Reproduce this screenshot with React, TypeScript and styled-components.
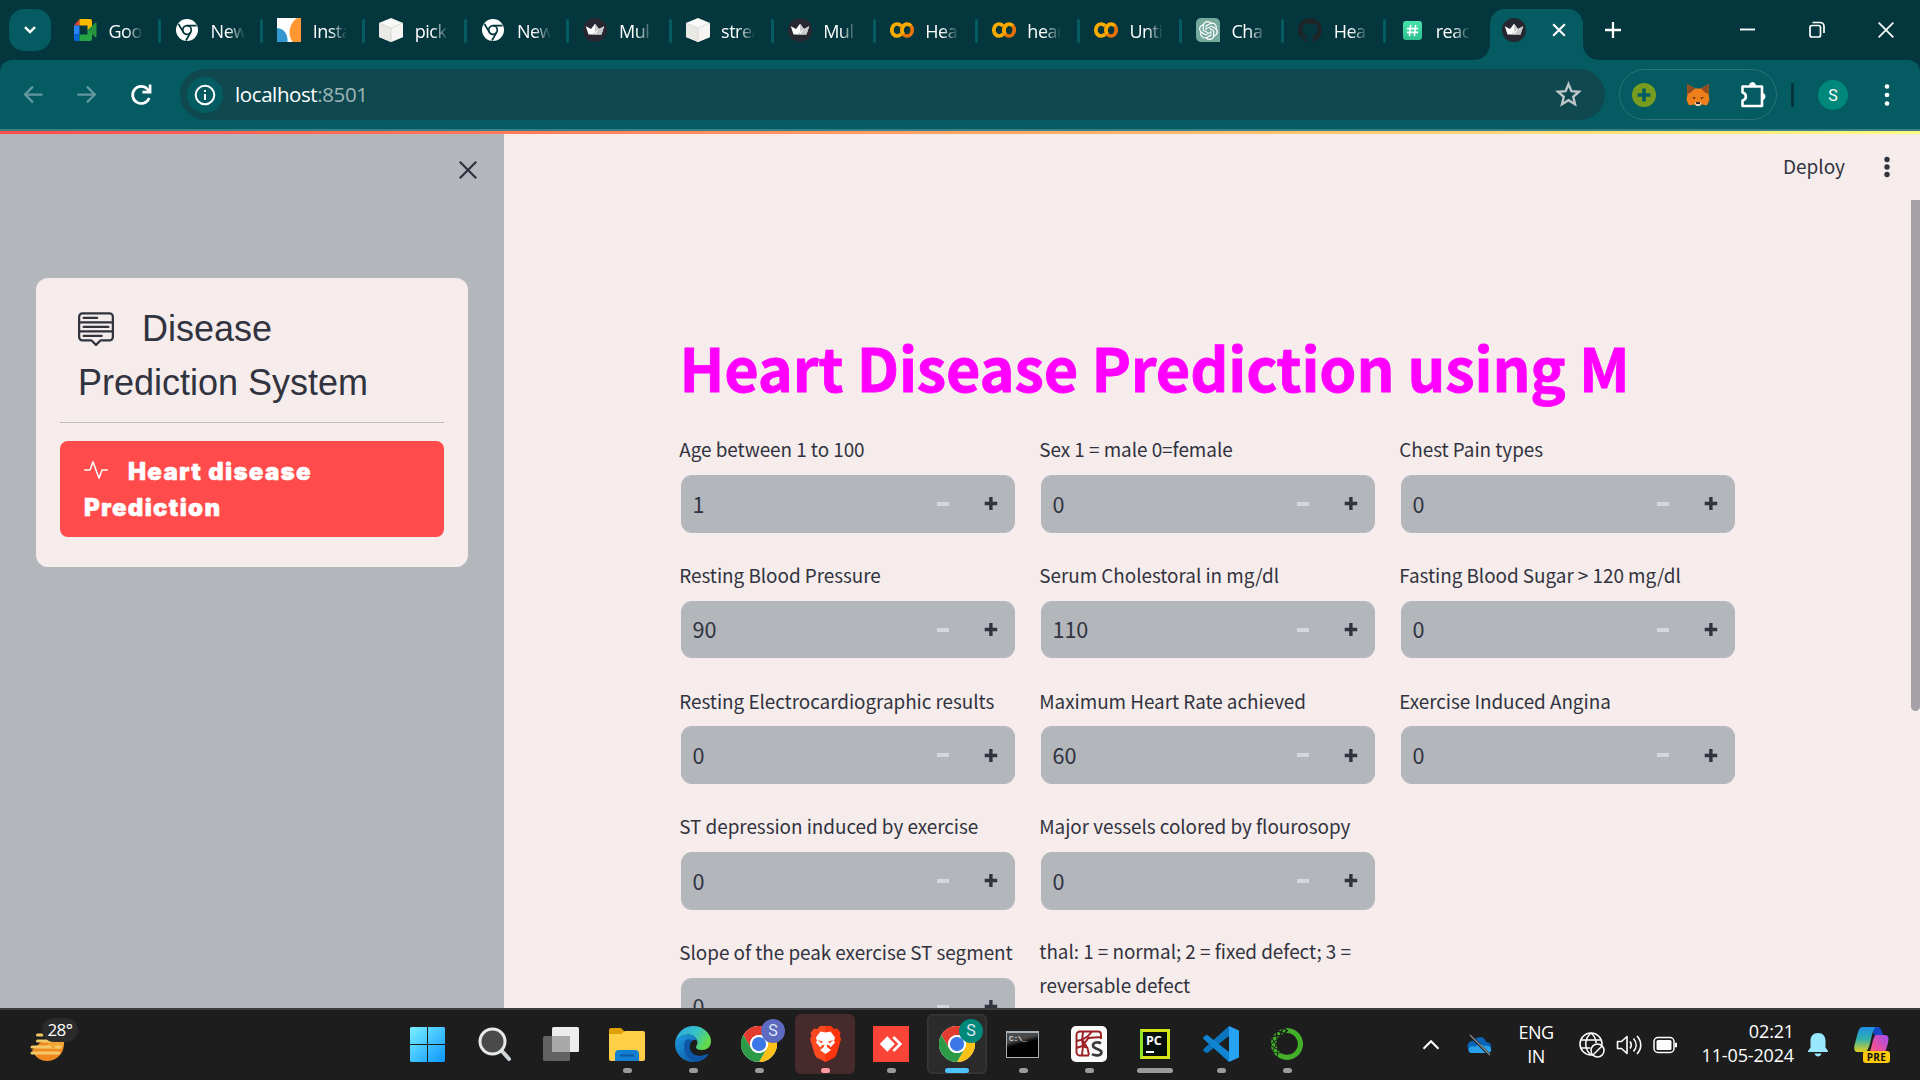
import React from "react";
import styled, { createGlobalStyle, css } from "styled-components";
import { BsActivity, BsMenuUp } from "react-icons/bs";
import { SiAnaconda, SiGithub, SiOpenai } from "react-icons/si";

const UI = '"Open Sans", "Noto Sans", sans-serif';
const SOURCE = '"Noto Sans CJK JP", "Noto Sans", sans-serif';
const ARIAL = '"Liberation Sans", Arial, sans-serif';

const c = {
  frame: "#03373d",
  toolbar: "#045b62",
  omnibox: "#10484f",
  side: "#b3b7bc",
  page: "#f5eceb",
  ink: "#31333f",
  red: "#ff4b4b",
  task: "#1d1d1d",
};

const Global = createGlobalStyle`
  * { box-sizing: border-box; }
  html, body { margin: 0; padding: 0; overflow: hidden; }
  svg { display: block; flex: none; }
`;

const Screen = styled.div`
  width: 1920px;
  height: 1080px;
  display: flex;
  flex-direction: column;
  overflow: hidden;
  font-family: ${UI};
  background: ${c.page};
`;

/* ---------- tab strip ---------- */
const TabStrip = styled.div`
  height: 60px;
  flex: none;
  display: flex;
  background: ${c.frame};
  padding-left: 9px;
`;
const TabSearch = styled.div`
  width: 42px;
  height: 42px;
  margin: 9px 8px 0 0;
  border-radius: 15px;
  background: ${c.toolbar};
  display: grid;
  place-items: center;
`;
const Tab = styled.div`
  width: 102.1px;
  flex: none;
  height: 60px;
  padding: 0 0 0 14px;
  display: flex;
  align-items: center;
`;
const Fav = styled.div`
  width: 24px;
  height: 24px;
  display: grid;
  place-items: center;
`;
const TabText = styled.div`
  width: 34px;
  margin-left: 11.5px;
  overflow: hidden;
  white-space: nowrap;
  color: #fff;
  font-size: 18px;
  line-height: 26px;
  letter-spacing: -0.5px;
  padding-top: 2px;
  mask-image: linear-gradient(90deg, #000 50%, transparent 100%);
`;
const TabRule = styled.i<{ $hidden?: boolean }>`
  width: 3px;
  height: 24px;
  margin: 2px 0 0 auto;
  border-radius: 2px;
  background: ${(p) => (p.$hidden ? "transparent" : c.toolbar)};
`;
const ActiveTab = styled.div`
  position: relative;
  width: 93px;
  flex: none;
  height: 51px;
  margin: 9px 0 0 1.6px;
  padding: 0 17px 9px 12px;
  display: flex;
  align-items: center;
  justify-content: space-between;
  border-radius: 15px 15px 0 0;
  background: ${c.toolbar};
  &::before,
  &::after {
    content: "";
    position: absolute;
    bottom: 0;
    width: 15px;
    height: 15px;
  }
  &::before {
    left: -15px;
    background: radial-gradient(circle at 0 0, transparent 14.5px, ${c.toolbar} 15px);
  }
  &::after {
    right: -15px;
    background: radial-gradient(circle at 100% 0, transparent 14.5px, ${c.toolbar} 15px);
  }
`;
const NewTab = styled.div`
  width: 60px;
  padding-top: 22px;
  display: flex;
  justify-content: center;
`;
const WindowButtons = styled.div`
  margin-left: auto;
  display: flex;
  height: 59px;
`;
const WindowButton = styled.div`
  width: 69px;
  display: grid;
  place-items: center;
`;

/* ---------- toolbar ---------- */
const ToolbarBack = styled.div`
  flex: none;
  height: 69px;
  background: ${c.frame};
`;
const Toolbar = styled.div`
  height: 69px;
  border-radius: 12px 12px 0 0;
  background: ${c.toolbar};
  display: flex;
  align-items: center;
  padding: 0 6px;
`;
const NavButton = styled.div`
  width: 54px;
  height: 54px;
  display: grid;
  place-items: center;
`;
const Omnibox = styled.div`
  width: 1425px;
  height: 51px;
  margin-left: 12px;
  border-radius: 26px;
  padding: 0 23px 0 7px;
  background: ${c.omnibox};
  display: flex;
  align-items: center;
`;
const InfoChip = styled.div`
  width: 36px;
  height: 36px;
  border-radius: 50%;
  background: ${c.toolbar};
  display: grid;
  place-items: center;
`;
const Url = styled.div`
  margin: -1px auto 0 12px;
  font-size: 20.5px;
  line-height: 30px;
  color: #fff;
  letter-spacing: -0.4px;
  span { color: #9fb6b8; }
`;
const Extensions = styled.div`
  width: 158px;
  height: 51px;
  margin-left: 14px;
  border: 1.5px solid #2c7278;
  border-radius: 26px;
  display: flex;
  align-items: center;
  justify-content: space-between;
  padding: 0 10px 0 12px;
`;
const ToolRule = styled.i`
  width: 3px;
  height: 24px;
  margin-left: 14px;
  background: ${c.frame};
`;
const Avatar = styled.div`
  width: 30px;
  height: 30px;
  margin-left: 24px;
  border-radius: 50%;
  background: #00897b;
  color: #fff;
  font: 16px/31px Roboto, sans-serif;
  text-align: center;
`;
const KebabSpot = styled.div`
  margin-left: 35px;
`;
const Seam = styled.div`
  height: 2px;
  flex: none;
  background: #3b8084;
`;
const Decoration = styled.div`
  height: 3px;
  flex: none;
  background: linear-gradient(90deg, #ff4b4b, #fffd80);
`;

/* ---------- page ---------- */
const Body = styled.div`
  height: 874px;
  flex: none;
  display: flex;
  overflow: hidden;
`;
const Sidebar = styled.aside`
  width: 504px;
  flex: none;
  background: ${c.side};
  padding: 27px 36px 0;
`;
const CloseRow = styled.div`
  height: 117px;
  display: flex;
  justify-content: flex-end;
  margin-right: -9px;
`;
const Card = styled.nav`
  height: 289px;
  border-radius: 12px;
  background: ${c.page};
  padding: 24px;
`;
const MenuTitle = styled.div`
  padding: 0 18px;
  font: 36px/54px ${ARIAL};
  color: ${c.ink};
  svg { display: inline-block; vertical-align: -5px; margin-right: 28px; }
`;
const MenuRule = styled.div`
  height: 1px;
  margin: 12px 0 18px;
  background: #bdbcc0;
`;
const MenuLink = styled.div`
  height: 96px;
  padding: 13px 24px 0;
  border-radius: 8px;
  background: ${c.red};
  color: #fff;
  font: 900 24px/36px Inter, ${ARIAL};
  letter-spacing: 1.3px;
  -webkit-text-stroke: 0.5px #fff;
  svg { display: inline-block; vertical-align: -2px; margin-right: 20px; }
`;
const Main = styled.main`
  flex: 1;
  min-width: 0;
  display: flex;
  flex-direction: column;
  background: ${c.page};
`;
const Header = styled.header`
  height: 66px;
  flex: none;
  display: flex;
  align-items: center;
  justify-content: flex-end;
  padding-right: 29px;
  gap: 38px;
  font: 19px/30px ${SOURCE};
  color: ${c.ink};
  span { margin-top: -2px; }
`;
const Scroller = styled.div`
  flex: 1;
  min-height: 0;
  display: flex;
  justify-content: space-between;
  padding-left: 176px;
`;
const Thumb = styled.div`
  width: 9px;
  height: 511px;
  background: #a5a1a7;
  border-radius: 0 0 5px 5px;
`;
const Content = styled.div`
  width: 1056px;
  padding-top: 126px;
`;
const Title = styled.h1`
  margin: 0 0 0 -0.5px;
  height: 106px;
  font: 700 59.4px/80px ${SOURCE};
  letter-spacing: -0.16px;
  -webkit-text-stroke: 0.8px #ff00ff;
  white-space: nowrap;
  color: #ff00ff;
`;
const Columns = styled.div`
  display: grid;
  grid-template-columns: repeat(3, 336px);
  gap: 24px;
  align-items: start;
`;
const Column = styled.div`
  display: flex;
  flex-direction: column;
  gap: 24px;
`;
const Label = styled.label`
  min-height: 35px;
  margin: -0.4px 0 8.4px -0.7px;
  display: flex;
  align-items: center;
  font: 18.9px/33.6px ${SOURCE};
  letter-spacing: -0.04px;
  color: ${c.ink};
`;
const InputBox = styled.div`
  height: 57.7px;
  margin: 0 1px 1px;
  border-radius: 11px;
  background: ${c.side};
  display: flex;
  align-items: center;
`;
const Value = styled.span`
  flex: 1;
  padding: 0 0 0.5px 11.4px;
  font: 21.6px/34px ${SOURCE};
  color: ${c.ink};
`;
const Step = styled.span`
  width: 48px;
  display: grid;
  place-items: center;
`;

/* ---------- taskbar ---------- */
const Taskbar = styled.footer`
  height: 72px;
  flex: none;
  display: flex;
  background: ${c.task};
  border-top: 2px solid #3c3c3e;
  color: #fff;
`;
const Weather = styled.div`
  width: 394px;
  padding: 8px 0 0 28px;
`;
const WeatherArt = styled.div`
  position: relative;
  width: 52px;
  height: 52px;
`;
const TempBadge = styled.span`
  position: absolute;
  left: 14px;
  top: 0;
  width: 36px;
  height: 24px;
  border-radius: 12px;
  background: #2b2b2c;
  font-size: 17px;
  line-height: 24px;
  letter-spacing: -0.5px;
  text-align: center;
`;
const App66 = styled.div<{ $tint?: string; $edge?: string; $gap?: number }>`
  width: 60px;
  height: 60px;
  margin: 4px 3px 0 ${(p) => 3 + (p.$gap ?? 0)}px;
  border-radius: 6px;
  display: flex;
  flex-direction: column;
  align-items: center;
  padding-top: 12px;
  position: relative;
  ${(p) => p.$tint && css`background: ${p.$tint};`}
  ${(p) => p.$edge && css`box-shadow: inset 0 0 0 1.5px ${p.$edge};`}
`;
const Glyph = styled.div`
  width: 42px;
  height: 36px;
  display: grid;
  place-items: center;
`;
const Indicator = styled.i<{ $w?: number; $color?: string }>`
  width: ${(p) => p.$w ?? 9}px;
  height: 5px;
  margin-top: 6px;
  border-radius: 3px;
  background: ${(p) => p.$color ?? "#9b9b9b"};
`;
const ProfileBadge = styled.span<{ $color: string }>`
  position: absolute;
  right: 4px;
  top: 5px;
  width: 24px;
  height: 24px;
  border-radius: 50%;
  background: ${(p) => p.$color};
  color: #dfe6f2;
  font: 16px/24px Roboto, sans-serif;
  text-align: center;
`;
const Tray = styled.div`
  margin-left: auto;
  display: flex;
  align-items: center;
  padding-right: 18px;
  height: 69px;
`;
const TrayCell = styled.div<{ $w: number }>`
  width: ${(p) => p.$w}px;
  display: grid;
  place-items: center;
`;
const TrayText = styled.div<{ $w: number; $right?: boolean }>`
  width: ${(p) => p.$w}px;
  font-size: 18px;
  line-height: 24px;
  letter-spacing: ${(p) => (p.$right ? -0.15 : -0.5)}px;
  white-space: nowrap;
  margin-top: ${(p) => (p.$right ? -3 : -1)}px;
  margin-right: ${(p) => (p.$right ? 0 : -1)}px;
  display: flex;
  flex-direction: column;
  align-items: ${(p) => (p.$right ? "flex-end" : "center")};
`;

/* ---------- drawings ---------- */
const Line = ({ d, size, w = 2, color = "#fff", box = 24 }: { d: string; size: number; w?: number; color?: string; box?: number }) => (
  <svg width={size} height={size} viewBox={`0 0 ${box} ${box}`} fill="none" stroke={color} strokeWidth={w}>
    <path d={d} />
  </svg>
);
const Kebab = ({ color, gap, r }: { color: string; gap: number; r: number }) => (
  <svg width="8" height="30" viewBox="0 0 8 30" fill={color}>
    <circle cx="4" cy={15 - gap} r={r} />
    <circle cx="4" cy="15" r={r} />
    <circle cx="4" cy={15 + gap} r={r} />
  </svg>
);
const Crown = () => (
  <svg width="24" height="24" viewBox="0 0 24 24">
    <circle cx="12" cy="12" r="12" fill="#262730" />
    <path d="M2.800 8.200L8 11l4-5.200L16 11l5.200-2.800-2.700 8.300h-13z" fill="#fff" />
    <path d="M12 5.800L16 11l-7 5.500h3zM21.200 8.200L16 11l-4 5.500h6.500z" fill="#c9c9cd" />
  </svg>
);
const ChromeFav = () => (
  <svg width="22" height="22" viewBox="0 0 22 22">
    <circle cx="11" cy="11" r="11" fill="#fff" />
    <circle cx="11" cy="11" r="4.300" fill="none" stroke={c.frame} strokeWidth="1.700" />
    <path d="M11 6.700h9.500M7.300 13.100L2.500 5M14.700 13.100L10 21.500" stroke={c.frame} strokeWidth="1.700" />
  </svg>
);
const Meet = () => (
  <svg width="23" height="22" viewBox="0 0 23 22">
    <path d="M0 6.500L5.500 0v6.500z" fill="#ea4335" />
    <path d="M0 6.500h5.500v9H0z" fill="#2684fc" />
    <path d="M0 15.500h5.500V22H2a2 2 0 01-2-2z" fill="#0066da" />
    <path d="M5.500 0H16a2 2 0 012 2v6l-4.500 3V6.500h-8z" fill="#ffba00" />
    <path d="M5.500 15.500h8V11L18 7v13a2 2 0 01-2 2H5.500z" fill="#27a344" />
    <path d="M14 11l7-7c.8-.7 1.500-.4 1.500.5v13c0 .9-.7 1.200-1.500.5z" fill="#28903e" />
  </svg>
);
const Insta = () => (
  <svg width="24" height="24" viewBox="0 0 24 24">
    <path d="M0 0h24v24H0z" fill="#fff" />
    <path d="M0 10c7 .5 11 6 10.500 14H0z" fill="#3498d0" />
    <path d="M24 0h-4c-9 6-9 18-4.500 24H24z" fill="#ff9833" />
  </svg>
);
const Cube = () => (
  <svg width="24" height="24" viewBox="0 0 24 24">
    <path d="M12 0l12 5v14l-12 5L0 19V5z" fill="#fafafa" />
    <path d="M12 10l12-5v14l-12 5z" fill="#f6f5f3" />
    <path d="M12 10L0 5v14l12 5z" fill="#ebe9e6" />
    <path d="M0 5l12 5 12-5M12 10v14" stroke="#d4d2cf" fill="none" strokeWidth=".8" />
  </svg>
);
const Colab = () => (
  <svg width="24" height="16" viewBox="0 0 24 16" fill="none" strokeWidth="3.700">
    <path d="M11.200 4.200a5.300 6 0 100 7.600" stroke="#f9ab00" />
    <ellipse cx="17" cy="8" rx="5.200" ry="6" stroke="#e8710a" />
    <path d="M13.300 12.200a5.200 6 0 017.400-8.400" stroke="#f9ab00" />
  </svg>
);
const GptTile = styled.div`
  width: 24px;
  height: 24px;
  border-radius: 5px 5px 0 5px;
  background: #75a99c;
  color: #fff;
  display: grid;
  place-items: center;
`;
const HashTile = styled.div`
  width: 19px;
  height: 19px;
  border-radius: 3px;
  background: linear-gradient(#46e3ad, #2dc08e);
  display: grid;
  place-items: center;
`;
const Fox = () => (
  <svg width="24" height="24" viewBox="0 0 24 24">
    <path d="M1 1l8 4.500h6L23 1l-.5 10 1 6-2.500 5.500-5-1L13.500 23h-3L8 21.500l-5 1L.5 17l1-6z" fill="#ee7f1b" />
    <path d="M1 1l8 4.500L5.500 9 1.500 11zM23 1l-8 4.500L18.500 9l4 2z" fill="#8f4c20" />
    <path d="M6 14l3.500.6-1 1.600zM18 14l-3.500.6 1 1.600z" fill="#3a2a20" />
    <path d="M8.500 20l2-1h3l2 1-2 3h-3z" fill="#e6d2c0" />
    <path d="M10.300 19h3.400l.3 2h-4z" fill="#2a2220" />
  </svg>
);
const Chrome = () => (
  <svg width="36" height="36" viewBox="0 0 48 48">
    <circle cx="24" cy="24" r="24" fill="#fff" />
    <path d="M3.200 12A24 24 0 0144.800 12H24a12 12 0 00-10.400 18z" fill="#e33b2e" />
    <path d="M44.800 12A24 24 0 0124 48l10.400-18A12 12 0 0024 12z" fill="#fbc116" />
    <path d="M24 48A24 24 0 013.200 12l10.400 18A12 12 0 0034.400 30z" fill="#2d9a47" />
    <circle cx="24" cy="24" r="12" fill="#fff" />
    <circle cx="24" cy="24" r="9.500" fill="#3b78e7" />
  </svg>
);
const Edge = () => (
  <svg width="36" height="36" viewBox="0 0 36 36">
    <defs>
      <linearGradient id="e1" x1="0" y1="0" x2="1" y2=".4">
        <stop offset="0" stopColor="#2aa5e0" />
        <stop offset=".6" stopColor="#36c2c9" />
        <stop offset="1" stopColor="#62da4c" />
      </linearGradient>
      <linearGradient id="e2" x1="0" y1="0" x2="1" y2="1">
        <stop offset="0" stopColor="#1b9de2" />
        <stop offset="1" stopColor="#0c4a94" />
      </linearGradient>
    </defs>
    <path d="M0 18C1 7 9 0 18 0c11 0 18 8 18 15 0 6-4 9-9 9-4 0-6-1-6-3 0-1 1.500-2 1.500-4.500C22 12 18 8.500 13 8.500 7 8.500 1.500 12 0 18z" fill="url(#e1)" />
    <path d="M0 18C1 12 7 8.500 13 8.500c5 0 9 3 9.500 7-1-2-3.500-2-5-1-5 3-4.500 15 7 15.500 4 0 7-2 9-2C31 33 25 36 18 36 8 36 0 28 0 18z" fill="url(#e2)" />
    <path d="M10 15c-3 8 1 18 10 20.800C28 35 32 31 33.500 28c-2 0-5 2-9 2-11-.5-12-12.500-7-15.500-3-2-6-1.500-7.500.5z" fill="#0d57a6" />
  </svg>
);
const Brave = () => (
  <svg width="31" height="36" viewBox="0 0 31 36">
    <path d="M10 0h11l3 3.200 3-.7 3.500 4.500-1 3 1.500 3-4.500 15c-.7 2-1.500 3-3 4L15.500 36l-8-4c-1.500-1-2.300-2-3-4L0 13l1.500-3-1-3L4 2.500l3 .7z" fill="#fb4a20" />
    <path d="M15.500 0H21l3 3.200 3-.7 3.500 4.500-1 3 1.500 3-4.500 15c-.7 2-1.500 3-3 4l-8 4z" fill="#ff2d08" opacity=".7" />
    <path d="M15.500 6.500l5-1 4.500 6-1 3.500 1 1.500-4.500 5-1-2-3-1 1 3 3.500 2.500-5.500 4-5.500-4 3.500-2.500 1-3-3 1-1 2-4.500-5L7 15l-1-3.500 4.500-6z" fill="#fff" />
    <path d="M7.500 14l5.500 1.500-1.500 1.700zM23.500 14L18 15.500l1.500 1.700z" fill="#fb4a20" />
  </svg>
);
const AnyDesk = () => (
  <svg width="36" height="36" viewBox="0 0 36 36">
    <path d="M0 0h36v36H0z" fill="#fb4438" />
    <path d="M14.300 10.300l7.500 7.700-7.500 7.700L6.800 18z" fill="#fff" />
    <path d="M20.300 11l7 7-7 7" fill="none" stroke="#fff" strokeWidth="2.600" />
  </svg>
);
const CmdBox = styled.div`
  width: 33px;
  height: 27px;
  margin-right: 1px;
  border: 1.5px solid #a9b3bb;
  border-top-width: 2.5px;
  background: linear-gradient(165deg, #4a4a4a 0 30%, #000 46%);
  color: #fff;
  font: 8px/11px "Liberation Mono", monospace;
  letter-spacing: -0.4px;
  padding-left: 2px;
`;
const Spyder = () => (
  <svg width="36" height="36" viewBox="0 0 36 36">
    <rect width="36" height="36" rx="5" fill="#fafafa" />
    <path d="M30 13V8.500A3 3 0 0027 5.500H9a3.500 3.500 0 00-3.500 3.500v17A3.500 3.500 0 009 29.500h9M5.500 15c6-1 11-3 15-9M12 6l-1 8 1 6-1 9M5.500 22l6-2 6-8 12-1M12 20l5 2M11.500 14l5 8 1.500 7" fill="none" stroke="#9c1f23" strokeWidth="1.900" />
    <path d="M30 17.500c-2.500-1.800-8-1.500-8 2 0 4 8.500 3 8.500 7 0 3.500-6.500 3.500-9.500 1.700" fill="none" stroke="#3a3a3a" strokeWidth="2.600" />
  </svg>
);
const PyBox = styled.div`
  width: 30px;
  height: 30px;
  border: 3px solid #d5e51c;
  border-left-color: #8fe52c;
  background: #05100c;
  color: #fff;
  font: 700 12.5px/15px ${UI};
  padding: 1px 0 0 3px;
  &::after {
    content: "";
    display: block;
    width: 8px;
    height: 2px;
    margin-top: 3px;
    background: #fff;
  }
`;
const VsCode = () => (
  <svg width="36" height="36" viewBox="0 0 36 36">
    <path d="M26 0v10L4 27.200l-3-1.700c-1-.8-1-2 0-3z" fill="#0a74bd" />
    <path d="M26 36V26L4 8.800 1 10.500c-1 .8-1 2 0 3z" fill="#1086d3" />
    <path d="M26 0l10 4.500v27L26 36z" fill="#25a2f2" />
  </svg>
);
const Folder = () => (
  <svg width="36" height="33" viewBox="0 0 36 33">
    <path d="M0 2a2 2 0 012-2h10l4 4h17a2 2 0 012 2v6H0z" fill="#e0a008" />
    <path d="M0 6h12l4-3h18a2 2 0 012 2v26a2 2 0 01-2 2H2a2 2 0 01-2-2z" fill="#ffcf48" />
    <path d="M6 33v-7a4 4 0 014-4h16a4 4 0 014 4v7z" fill="#1180d2" />
    <path d="M11 27.500h14" stroke="#0a58a0" strokeWidth="2" />
  </svg>
);
const Start = () => (
  <svg width="35" height="35" viewBox="0 0 35 35">
    <defs>
      <linearGradient id="s" x1="0" y1="0" x2="1" y2="1">
        <stop offset="0" stopColor="#7af0ff" />
        <stop offset="1" stopColor="#0a96ff" />
      </linearGradient>
    </defs>
    <path d="M1 0h16v17H0V1zM18 0h16l1 1v16H18zM0 18h17v17H1l-1-1zM18 18h17v16l-1 1H18z" fill="url(#s)" />
  </svg>
);
const Search = () => (
  <svg width="34" height="34" viewBox="0 0 34 34">
    <path d="M23 23l8 9" stroke="#cfd6da" strokeWidth="4" strokeLinecap="round" />
    <circle cx="14.500" cy="14.500" r="12.500" fill="#4a4a4a" stroke="#e6e9ea" strokeWidth="3" />
  </svg>
);
const TaskView = () => (
  <svg width="36" height="34" viewBox="0 0 36 34">
    <rect x="0" y="9" width="27" height="25" rx="1.500" fill="#626262" />
    <rect x="9" y="0" width="27" height="25" rx="1.500" fill="#ededed" />
    <path d="M9 9h18v16H9z" fill="#a9a9a9" />
  </svg>
);
const WeatherSun = () => (
  <svg width="52" height="52" viewBox="0 0 52 52">
    <path d="M4 32c3 7 8 11 15 11 9 0 17-7 17-17 0-5-2-9-5-11L12 25z" fill="#f08a20" />
    <path d="M22 23h14c0 3-1 6-2 8H17z" fill="#f3a733" />
    <g strokeWidth="3" stroke="#f3c968" strokeLinecap="round">
      <path d="M9.500 17H14M9.500 23H22M4 29h18M28 29h4M4 35h27" />
    </g>
  </svg>
);
const OneDrive = () => (
  <svg width="28" height="22" viewBox="0 0 26 22">
    <path d="M2 15C0 9 5 6 8 7c3-6 11-5 12 1 4 0 6 3 5 7z" fill="#0a64b8" />
    <path d="M3 18c-2-4 2-7 6-5 3-4 7-3 9-1 5-1 8 2 7 5-.5 1.500-2 2-3 2H6c-1.500 0-2.500-.5-3-1z" fill="#28a0ea" />
    <path d="M3.500 1l20 20" stroke="#1d1d1d" strokeWidth="2.500" />
    <path d="M4 1l20 20" stroke="#8b8b8b" strokeWidth="1.300" />
  </svg>
);
const Globe = () => (
  <svg width="26" height="26" viewBox="0 0 26 26" fill="none" stroke="#fff" strokeWidth="1.500">
    <circle cx="12" cy="12" r="11" />
    <path d="M12 1c-7 6-7 16 0 22M12 1c3.500 3 5 6 5.200 10M2 8h20M2 16h9" />
    <circle cx="18.500" cy="18.500" r="6.500" fill={c.task} />
    <path d="M14 23l9-9" />
  </svg>
);
const Speaker = () => (
  <svg width="26" height="24" viewBox="0 0 26 24" fill="none" stroke="#fff" strokeWidth="1.600" strokeLinejoin="round">
    <path d="M1.500 8.500h4L11 3.500v17l-5.500-5h-4zM14 8.500c1.500 2 1.500 5 0 7M17.500 5.500c3.500 4 3.500 9 0 13M21 3c5 5.500 5 12.500 0 18" />
  </svg>
);
const Battery = () => (
  <svg width="25" height="18" viewBox="0 0 25 18">
    <rect x="1" y="1.500" width="20" height="15" rx="4" fill="none" stroke="#fff" strokeWidth="1.500" />
    <rect x="3.500" y="4" width="15" height="10" rx="1.500" fill="#fff" />
    <path d="M22.500 7h1v4h-1z" fill="#fff" stroke="#fff" />
  </svg>
);
const Bell = () => (
  <svg width="20" height="24" viewBox="0 0 20 24" fill="#98e9ff">
    <path d="M10 0c5 0 7.500 3.500 7.500 8v6.500L20 18v1H0v-1l2.500-3.500V8C2.500 3.500 5 0 10 0zM6.500 20.500h7c-.5 2-2 3-3.500 3s-3-1-3.500-3z" />
  </svg>
);
const CopilotArt = styled.div`
  position: relative;
  width: 36px;
  height: 36px;
`;
const PreTag = styled.span`
  position: absolute;
  left: 9px;
  bottom: 0;
  width: 27px;
  height: 12px;
  border-radius: 3px;
  background: #fdc90a;
  color: #111;
  font-size: 10px;
  line-height: 12px;
  font-weight: 700;
  letter-spacing: 0.4px;
  text-align: center;
`;
const Copilot = () => (
  <svg width="36" height="36" viewBox="0 0 36 36">
    <defs>
      <linearGradient id="c1" x1="0" y1="0" x2="0" y2="1">
        <stop offset="0" stopColor="#1d8fe8" />
        <stop offset=".5" stopColor="#34b2a8" />
        <stop offset="1" stopColor="#e5cf20" />
      </linearGradient>
      <linearGradient id="c2" x1="1" y1="0" x2="0" y2="1">
        <stop offset="0" stopColor="#a04cf0" />
        <stop offset=".6" stopColor="#f0509a" />
        <stop offset="1" stopColor="#ff7a45" />
      </linearGradient>
    </defs>
    <path d="M18 0h6c3 0 4 5 5 8h-9z" fill="#1747c4" />
    <path d="M9 0h13c-5 2-5 24-11 25H3c-3 0-3-4-2.500-7L4 5c1-3 2-5 5-5z" fill="url(#c1)" />
    <path d="M22 8h9c4 0 4 4 3 8l-3 10c-1 2-2 3-4 3H12c6-1 6-20 10-21z" fill="url(#c2)" />
  </svg>
);

/* ---------- data ---------- */
const tabs: [React.ReactNode, string][] = [
  [<Meet />, "Goo"],
  [<ChromeFav />, "New"],
  [<Insta />, "Insta"],
  [<Cube />, "pick"],
  [<ChromeFav />, "New"],
  [<Crown />, "Mul"],
  [<Cube />, "strea"],
  [<Crown />, "Mul"],
  [<Colab />, "Hea"],
  [<Colab />, "hear"],
  [<Colab />, "Unti"],
  [<GptTile><SiOpenai size={19} /></GptTile>, "Cha"],
  [<SiGithub size={24} color="#1f2429" />, "Hea"],
  [<HashTile><Line size={15} w={2.5} d="M9 3L7 21M17 3l-2 18M3 9h18M3 15h18" /></HashTile>, "reac"],
];
type FieldData = [string, string | null];
const columns: FieldData[][] = [
  [
    ["Age between 1 to 100", "1"],
    ["Resting Blood Pressure", "90"],
    ["Resting Electrocardiographic results", "0"],
    ["ST depression induced by exercise", "0"],
    ["Slope of the peak exercise ST segment", "0"],
  ],
  [
    ["Sex 1 = male 0=female", "0"],
    ["Serum Cholestoral in mg/dl", "110"],
    ["Maximum Heart Rate achieved", "60"],
    ["Major vessels colored by flourosopy", "0"],
    ["thal: 1 = normal; 2 = fixed defect; 3 = reversable defect", null],
  ],
  [
    ["Chest Pain types", "0"],
    ["Fasting Blood Sugar > 120 mg/dl", "0"],
    ["Exercise Induced Angina", "0"],
  ],
];

const Field = ({ label, value }: { label: string; value: string | null }) => (
  <div>
    <Label>{label}</Label>
    {value !== null && (
      <InputBox>
        <Value>{value}</Value>
        <Step>
          <svg width="12" height="4"><path d="M0 0h12v4H0z" fill="#d5d7e0" /></svg>
        </Step>
        <Step>
          <svg width="14" height="13"><path d="M.7 4.800h4.500V0h3.400v4.800h4.600v3.400H8.600V13H5.200V8.200H.7z" fill={c.ink} /></svg>
        </Step>
      </InputBox>
    )}
  </div>
);

export default function App() {
  return (
    <Screen>
      <Global />
      <TabStrip>
        <TabSearch><Line size={20} w={3} d="M6 8.500l6 6 6-6" /></TabSearch>
        {tabs.map(([icon, text], i) => (
          <Tab key={i}>
            <Fav>{icon}</Fav>
            <TabText>{text}</TabText>
            <TabRule $hidden={i === tabs.length - 1} />
          </Tab>
        ))}
        <ActiveTab>
          <Crown />
          <Line size={14} w={3.6} d="M2 2l20 20M22 2L2 22" />
        </ActiveTab>
        <NewTab><Line size={16} w={3.4} d="M12 0v24M0 12h24" /></NewTab>
        <WindowButtons>
          <WindowButton><Line size={15} w={3} d="M0 12h24" /></WindowButton>
          <WindowButton>
            <svg width="16" height="17" viewBox="0 0 16 17" fill="none" stroke="#fff" strokeWidth="1.700">
              <rect x="1" y="4.500" width="10.500" height="11.500" rx="2" />
              <path d="M3.500 1.500H11a4 4 0 014 4V12" />
            </svg>
          </WindowButton>
          <WindowButton><Line size={16} w={2.600} d="M1 1l22 22M23 1L1 23" /></WindowButton>
        </WindowButtons>
      </TabStrip>
      <ToolbarBack>
        <Toolbar>
          <NavButton><Line size={27} color="#64989c" d="M20 12H5M11.500 5l-7 7 7 7" /></NavButton>
          <NavButton><Line size={27} color="#64989c" d="M3 12h15M11.500 5l7 7-7 7" /></NavButton>
          <NavButton><Line size={28} w={2.300} d="M19 14.500A7.300 7.300 0 1117.500 7L19.500 9M19.800 3v6.600h-6.600" /></NavButton>
          <Omnibox>
            <InfoChip>
              <svg width="22" height="22" viewBox="0 0 22 22" fill="none" stroke="#fff" strokeWidth="2">
                <circle cx="11" cy="11" r="9.300" />
                <path d="M11 10v6M11 6v2" />
              </svg>
            </InfoChip>
            <Url>localhost<span>:8501</span></Url>
            <Line size={27} w={2.100} color="#bcc6c8" d="M12 2.800l2.600 6.300 6.700.5-5.100 4.400 1.600 6.600L12 17.100l-5.800 3.500 1.600-6.600-5.100-4.400 6.700-.5z" />
          </Omnibox>
          <Extensions>
            <svg width="24" height="24" viewBox="0 0 24 24">
              <circle cx="12" cy="12" r="12" fill="#789c1e" />
              <path d="M12 5.500v13M5.500 12h13" stroke={c.toolbar} strokeWidth="3.600" />
            </svg>
            <Fox />
            <svg width="26" height="26" viewBox="0 0 26 26" fill="none" stroke="#fff" strokeWidth="2.600" strokeLinejoin="round">
              <path d="M2.500 4.500h19.500V24H2.500v-5.500c4.500-1 4.500-7 0-8z" />
              <path d="M9.500 4a3 3.500 0 016 0zM22.500 11.500a2.500 3 0 010 6z" fill="#fff" strokeWidth="1" />
            </svg>
          </Extensions>
          <ToolRule />
          <Avatar>S</Avatar>
          <KebabSpot><Kebab color="#fff" gap={8.500} r={2.300} /></KebabSpot>
        </Toolbar>
      </ToolbarBack>
      <Seam />
      <Decoration />
      <Body>
        <Sidebar>
          <CloseRow><Line size={18} w={3} color={c.ink} d="M1 1l22 22M23 1L1 23" /></CloseRow>
          <Card>
            <MenuTitle><BsMenuUp size={36} />Disease<br />Prediction System</MenuTitle>
            <MenuRule />
            <MenuLink><BsActivity size={24} />Heart disease<br />Prediction</MenuLink>
          </Card>
        </Sidebar>
        <Main>
          <Header>
            <span>Deploy</span>
            <Kebab color={c.ink} gap={7.500} r={2.700} />
          </Header>
          <Scroller>
            <Content>
              <Title>Heart Disease Prediction using M</Title>
              <Columns>
                {columns.map((fields, i) => (
                  <Column key={i}>
                    {fields.map(([label, value]) => <Field key={label} label={label} value={value} />)}
                  </Column>
                ))}
              </Columns>
            </Content>
            <Thumb />
          </Scroller>
        </Main>
      </Body>
      <Taskbar>
        <Weather>
          <WeatherArt><WeatherSun /><TempBadge>28°</TempBadge></WeatherArt>
        </Weather>
        <App66><Glyph><Start /></Glyph></App66>
        <App66 $gap={2}><Glyph><Search /></Glyph></App66>
        <App66><Glyph><TaskView /></Glyph></App66>
        <App66><Glyph><Folder /></Glyph><Indicator /></App66>
        <App66><Glyph><Edge /></Glyph><Indicator /></App66>
        <App66><Glyph><Chrome /></Glyph><Indicator /><ProfileBadge $color="#5c6bc0">S</ProfileBadge></App66>
        <App66 $tint="#472a2b"><Glyph><Brave /></Glyph><Indicator $color="#ff99a4" /></App66>
        <App66><Glyph><AnyDesk /></Glyph><Indicator /></App66>
        <App66 $tint="#2b2b2b" $edge="#383838"><Glyph><Chrome /></Glyph><Indicator $w={24} $color="#4cc2ff" /><ProfileBadge $color="#00897b">S</ProfileBadge></App66>
        <App66><Glyph><CmdBox>C:\_</CmdBox></Glyph><Indicator /></App66>
        <App66><Glyph><Spyder /></Glyph><Indicator /></App66>
        <App66><Glyph><PyBox>PC</PyBox></Glyph><Indicator $w={36} /></App66>
        <App66><Glyph><VsCode /></Glyph><Indicator /></App66>
        <App66><Glyph><SiAnaconda size={32} color="#43b02a" /></Glyph><Indicator /></App66>
        <Tray>
          <TrayCell $w={48}><Line size={18} w={2.600} d="M2 17l10-10 10 10" /></TrayCell>
          <TrayCell $w={48}><OneDrive /></TrayCell>
          <TrayText $w={66}><span>ENG</span><span>IN</span></TrayText>
          <TrayCell $w={48}><Globe /></TrayCell>
          <TrayCell $w={26}><Speaker /></TrayCell>
          <TrayCell $w={46}><Battery /></TrayCell>
          <TrayText $w={106} $right><span>02:21</span><span>11-05-2024</span></TrayText>
          <TrayCell $w={48}><Bell /></TrayCell>
          <TrayCell $w={60}><CopilotArt><Copilot /><PreTag>PRE</PreTag></CopilotArt></TrayCell>
        </Tray>
      </Taskbar>
    </Screen>
  );
}
